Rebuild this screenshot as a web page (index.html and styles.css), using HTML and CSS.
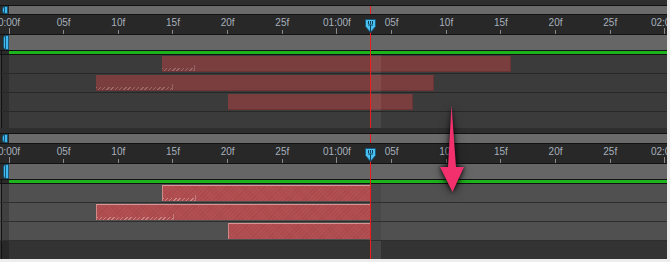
FILE: index.html
```html
<!DOCTYPE html>
<html lang="en">
  <head>
    <meta charset="UTF-8" />
    <meta name="viewport" content="width=device-width, initial-scale=1.0" />
    <title>Timeline trim</title>
    <link rel="stylesheet" href="styles.css">
  </head>
  <body>
    <div class="timeline">
      <!-- Antes -->
      <section class="panel before">
        <div class="strip"></div>
        <div class="bar-row nav">
          <div class="gut"><span class="grip grip-nav"></span></div>
          <div class="bar"></div>
        </div>
        <div class="ruler">
          <div class="scale">
            <span class="mark major">0:00f</span>
            <span class="mark">05f</span>
            <span class="mark">10f</span>
            <span class="mark">15f</span>
            <span class="mark">20f</span>
            <span class="mark">25f</span>
            <span class="mark major">01:00f</span>
            <span class="mark">05f</span>
            <span class="mark">10f</span>
            <span class="mark">15f</span>
            <span class="mark">20f</span>
            <span class="mark">25f</span>
            <span class="mark major">02:00f</span>
          </div>
          <svg class="cti" width="11" height="14" viewBox="0 0 11 14">
            <path d="M0.5 0.5H10.5V7.5L5.5 13.5L0.5 7.5Z" fill="#48c0f2" stroke="#17597c" />
            <path d="M3.5 2V5M5.5 2V5M7.5 2V5M3 6H8M5.5 6V13" stroke="#123f57" />
          </svg>
        </div>
        <div class="bar-row work">
          <div class="gut"><span class="grip grip-work"></span></div>
          <div class="bar"></div>
        </div>
        <div class="green-row">
          <div class="gut"></div>
          <div class="green"></div>
        </div>
        <div class="tracks">
          <div class="track">
            <div class="gut"></div>
            <div class="lane">
              <div class="clip" style="left:153px;width:349px"><span class="trim" style="width:32px"></span><span class="trim-end"></span></div>
            </div>
          </div>
          <div class="track">
            <div class="gut"></div>
            <div class="lane">
              <div class="clip" style="left:87px;width:338px"><span class="trim" style="width:76px"></span><span class="trim-end"></span></div>
            </div>
          </div>
          <div class="track">
            <div class="gut"></div>
            <div class="lane">
              <div class="clip" style="left:219px;width:185px"></div>
            </div>
          </div>
          <div class="track">
            <div class="gut"></div>
            <div class="lane"></div>
          </div>
        </div>
        <div class="playhead"></div>
      </section>

      <!-- Después -->
      <section class="panel after">
        <div class="strip"></div>
        <div class="bar-row nav">
          <div class="gut"><span class="grip grip-nav"></span></div>
          <div class="bar"></div>
        </div>
        <div class="ruler">
          <div class="scale">
            <span class="mark major">0:00f</span>
            <span class="mark">05f</span>
            <span class="mark">10f</span>
            <span class="mark">15f</span>
            <span class="mark">20f</span>
            <span class="mark">25f</span>
            <span class="mark major">01:00f</span>
            <span class="mark">05f</span>
            <span class="mark">10f</span>
            <span class="mark">15f</span>
            <span class="mark">20f</span>
            <span class="mark">25f</span>
            <span class="mark major">02:00f</span>
          </div>
          <svg class="cti" width="11" height="14" viewBox="0 0 11 14">
            <path d="M0.5 0.5H10.5V7.5L5.5 13.5L0.5 7.5Z" fill="#48c0f2" stroke="#17597c" />
            <path d="M3.5 2V5M5.5 2V5M7.5 2V5M3 6H8M5.5 6V13" stroke="#123f57" />
          </svg>
        </div>
        <div class="bar-row work">
          <div class="gut"><span class="grip grip-work"></span></div>
          <div class="bar"></div>
        </div>
        <div class="green-row">
          <div class="gut"></div>
          <div class="green"></div>
        </div>
        <div class="tracks">
          <div class="track">
            <div class="gut"></div>
            <div class="lane">
              <div class="clip" style="left:153px;width:208px"><span class="trim" style="width:32px"></span><span class="trim-end"></span></div>
            </div>
          </div>
          <div class="track">
            <div class="gut"></div>
            <div class="lane">
              <div class="clip" style="left:87px;width:274px"><span class="trim" style="width:76px"></span><span class="trim-end"></span></div>
            </div>
          </div>
          <div class="track">
            <div class="gut"></div>
            <div class="lane">
              <div class="clip" style="left:219px;width:142px"></div>
            </div>
          </div>
          <div class="track">
            <div class="gut"></div>
            <div class="lane"></div>
          </div>
        </div>
        <div class="playhead"></div>
      </section>

      <svg class="arrow" width="34" height="98" viewBox="0 0 34 98">
        <path d="M15.5 5L20 67H28L16.5 92L4 67H12Z" fill="#f2306e" />
      </svg>
    </div>
  </body>
</html>
```

FILE: styles.css
```css
body {
  margin: 0;
  background: #ededed;
  font-family: "Liberation Sans", Arial, sans-serif;
}
.timeline {
  position: relative;
  width: 667px;
}
.panel {
  position: relative;
  display: flex;
  flex-direction: column;
  background: #2c2c2c;
  overflow: hidden;
}
.strip {
  height: 5px;
  background: #2e2e2e;
  border-bottom: 1px solid #121212;
}
.bar-row {
  display: flex;
  background: #2b2b2b;
  border-bottom: 1px solid #121212;
}
.nav {
  height: 8px;
}
.after .nav {
  height: 9px;
}
.work {
  height: 15px;
}
.bar-row .gut {
  width: 9px;
  padding-left: 2px;
  box-sizing: border-box;
  display: flex;
  align-items: center;
}
.bar {
  flex: 1;
  background: #6a6a6a;
}
.work .bar {
  background: #666;
}
.grip {
  display: block;
  box-sizing: border-box;
  border: 1px solid #16587a;
  border-radius: 3px 0 0 3px;
  background: linear-gradient(90deg, #41b8ef 0 1px, #16587a 1px 2px, #41b8ef 2px);
}
.grip-nav {
  width: 6px;
  height: 8px;
}
.after .grip-nav {
  height: 9px;
}
.grip-work {
  width: 6px;
  height: 15px;
  margin-left: 1px;
}
.ruler {
  position: relative;
  height: 19px;
  background: #282828;
  border-bottom: 1px solid #121212;
  overflow: hidden;
}
.scale {
  display: flex;
  height: 100%;
  margin-left: -18.33px;
}
.mark {
  flex: 0 0 54.667px;
  display: flex;
  flex-direction: column;
  align-items: center;
  padding-top: 3px;
  box-sizing: border-box;
  font-size: 10px;
  line-height: 10px;
  color: #a7b1bc;
  white-space: nowrap;
}
.mark::after {
  content: "";
  margin-top: auto;
  width: 1px;
  height: 4px;
  background: #8a8a8a;
}
.mark.major::after {
  height: 8px;
}
.cti {
  position: absolute;
  left: 365px;
  top: 4px;
  z-index: 3;
  display: block;
}
.green-row {
  display: flex;
  height: 3px;
  background: #2b2b2b;
  border-bottom: 1px solid #121212;
}
.green-row .gut,
.track .gut {
  width: 7px;
  margin-left: 1px;
  border-left: 1px solid #111;
}
.green {
  flex: 1;
  background: #1db31d;
}
.track {
  display: flex;
  height: 18px;
  background: #3b3b3b;
  border-bottom: 1px solid #282828;
}
.track:last-child {
  height: 16px;
  border-bottom: 0;
}
.track .gut {
  background: rgba(0, 0, 0, 0.2);
}
.after .track {
  background: #505050;
  border-bottom-color: #2e2e2e;
}
.after .track:last-child {
  height: 18px;
  background: #333;
}
.lane {
  flex: 1;
  position: relative;
}
.lane::after {
  content: "";
  position: absolute;
  top: 0;
  bottom: 0;
  left: 362px;
  width: 10px;
  background: rgba(255, 255, 255, 0.07);
}
.after .lane::after {
  background: rgba(0, 0, 0, 0.08);
}
.after .track:last-child .lane::after {
  background: rgba(255, 255, 255, 0.09);
}
.clip {
  position: absolute;
  top: 1px;
  height: 16px;
  box-sizing: border-box;
  display: flex;
  align-items: flex-end;
  background: #7b3e3e;
  border-right: 1px solid #6a3434;
  border-bottom: 1px solid #6a3434;
}
.trim {
  height: 3px;
  background: repeating-linear-gradient(135deg, #9a6a6a 0 1px, transparent 1px 3px);
}
.trim-end {
  width: 1px;
  height: 6px;
  background: #946464;
}
.after .clip {
  border: 0;
  border-top: 1px solid #d99494;
  border-left: 1px solid #cf8888;
  background-color: #b04b4e;
  background-image:
    repeating-linear-gradient(45deg, rgba(255, 255, 255, 0.035) 0 1px, transparent 1px 2px),
    repeating-linear-gradient(-45deg, rgba(0, 0, 0, 0.05) 0 1px, transparent 1px 3px);
}
.after .trim {
  background: repeating-linear-gradient(135deg, #c98585 0 1px, transparent 1px 3px);
}
.after .trim-end {
  background: #c07c7c;
}
.playhead {
  position: absolute;
  left: 370px;
  top: 6px;
  bottom: 0;
  width: 1px;
  z-index: 2;
  background: linear-gradient(#f21b1b 0 8px, transparent 8px 13px, #f21b1b 13px);
}
.after .playhead {
  background: linear-gradient(#f21b1b 0 9px, transparent 9px 14px, #f21b1b 14px);
}
.arrow {
  position: absolute;
  left: 436px;
  top: 100px;
  z-index: 4;
  filter: drop-shadow(0 0 2px rgba(0, 0, 0, 0.9)) drop-shadow(0 2px 4px rgba(0, 0, 0, 0.5));
}
```
